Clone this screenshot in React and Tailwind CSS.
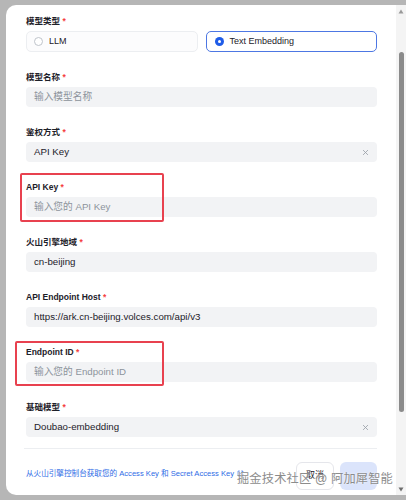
import React from 'react';

const font = { fontFamily: '"Liberation Sans", "Noto Sans CJK SC", sans-serif' };

const Label = ({ children }) => (
  <div className="h-[14px] leading-[14px] mb-[3px] text-[8.5px] font-semibold text-[#1d2129]">
    {children} <span className="text-[#f53f3f]">*</span>
  </div>
);

const Input = ({ value, placeholder, clear }) => (
  <div className="h-[20px] rounded-[4px] bg-[#f2f3f5] flex items-center pl-[8px] pr-[8px] text-[9.7px]">
    <span className={`flex-1 ${value ? 'text-[#1d2129]' : 'text-[#8d939c]'}`}>{value || placeholder}</span>
    {clear && (
      <svg width="7" height="7" viewBox="0 0 10 10" className="text-[#9aa0a8]">
        <path d="M1.5 1.5 L8.5 8.5 M8.5 1.5 L1.5 8.5" stroke="currentColor" strokeWidth="1.2" />
      </svg>
    )}
  </div>
);

const Field = ({ label, children, mark }) => (
  <div className="relative">
    <Label>{label}</Label>
    {children}
    {mark && <div className={`absolute border-2 border-[#e8414f] rounded-[2px] ${mark}`} />}
  </div>
);

export default function App() {
  return (
    <div className="w-[406px] h-[500px] bg-[#b6b6b6] pt-[5px] pl-[6px] overflow-hidden" style={font}>
      <div className="h-[490px] bg-white rounded-l-[10px] flex">
        {/* form */}
        <div className="flex-1 pl-[20px] pr-[19px] pt-[9px] flex flex-col gap-[18px]">
          <Field label="模型类型">
            <div className="grid grid-cols-2 gap-[8px]">
              <div className="h-[21px] rounded-[5px] border border-[#eceef1] bg-[#fcfcfd] flex items-center pl-[7px] gap-[6px] text-[9px] text-[#1d2129]">
                <span className="w-[9px] h-[9px] rounded-full border border-[#bfc4cb] bg-white" />
                LLM
              </div>
              <div className="h-[21px] rounded-[5px] border border-[#4d77e3] bg-white flex items-center pl-[8px] gap-[6px] text-[9px] text-[#1d2129]">
                <span className="w-[9px] h-[9px] rounded-full bg-[#1f5ce8] flex items-center justify-center">
                  <span className="w-[3px] h-[3px] rounded-full bg-white" />
                </span>
                Text Embedding
              </div>
            </div>
          </Field>
          <Field label="模型名称">
            <Input placeholder="输入模型名称" />
          </Field>
          <Field label="鉴权方式">
            <Input value="API Key" clear />
          </Field>
          <Field label="API Key" mark="left-[-6px] top-[-7px] w-[144px] h-[49px]">
            <Input placeholder="输入您的 API Key" />
          </Field>
          <Field label="火山引擎地域">
            <Input value="cn-beijing" />
          </Field>
          <Field label="API Endpoint Host">
            <Input value="https://ark.cn-beijing.volces.com/api/v3" />
          </Field>
          <Field label="Endpoint ID" mark="left-[-11px] top-[-4px] w-[149px] h-[45px]">
            <Input placeholder="输入您的 Endpoint ID" />
          </Field>
          <div className="relative">
            <Label>基础模型</Label>
            <Input value="Doubao-embedding" clear />
            <div className="mt-[11px] h-px bg-[#eceef1] -ml-[2px]" />
            <div className="mt-[13px] flex items-center">
              <div className="flex-1 flex items-center gap-[3px] text-[7.6px] text-[#2e6be6] -mt-[5px]">
                从火山引擎控制台获取您的 Access Key 和 Secret Access Key
                <svg width="7" height="7" viewBox="0 0 10 10" fill="none" stroke="currentColor" strokeWidth="1">
                  <path d="M4 1.5H1.5v7h7V6M6 1.5h2.5V4M8.5 1.5L4.5 5.5" />
                </svg>
              </div>
              <div className="w-[38px] h-[28px] rounded-[6px] border border-[#e5e6eb] bg-white flex items-center justify-center text-[9px] text-[#1d2129]">
                取消
              </div>
              <div className="ml-[6px] w-[37px] h-[28px] rounded-[6px] bg-[#dbe4fb]" />
            </div>
            <div className="absolute right-[-16px] top-[70px] text-[12.2px] text-[#8c8c8c] tracking-[0.2px] whitespace-nowrap" style={{ textShadow: '0 0 2px #fff' }}>
              掘金技术社区 @ 阿加犀智能
            </div>
          </div>
        </div>
        {/* scrollbar */}
        <div className="w-[10px] bg-[#f4f4f4] flex flex-col items-center pt-[4px] pb-[3px]">
          <svg width="6" height="5" viewBox="0 0 6 5"><path d="M3 0.5L5.5 4.5H0.5Z" fill="#9a9a9a" /></svg>
          <div className="mt-[38px] w-[5px] h-[360px] rounded-full bg-[#8b8b8b]" />
          <div className="flex-1" />
          <svg width="6" height="5" viewBox="0 0 6 5"><path d="M3 4.5L5.5 0.5H0.5Z" fill="#6e6e6e" /></svg>
        </div>
      </div>
    </div>
  );
}
